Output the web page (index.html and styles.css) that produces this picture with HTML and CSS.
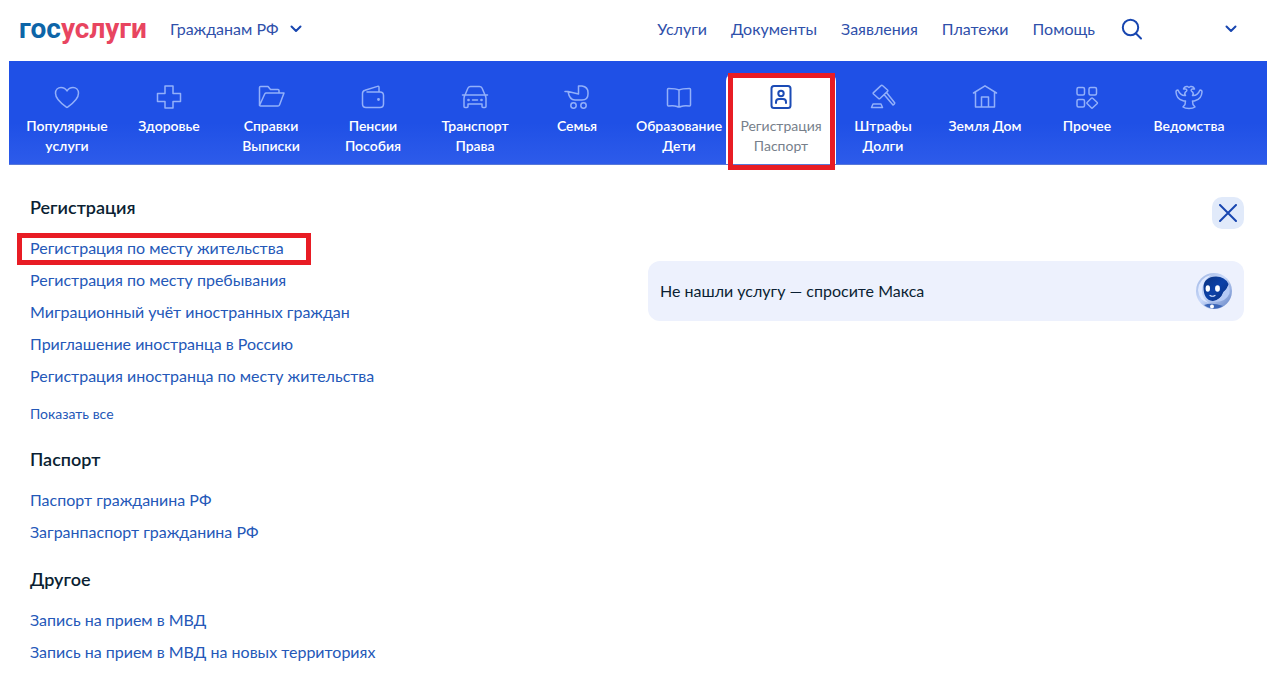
FILE: index.html
```
<!DOCTYPE html>
<html lang="ru">
<head>
<meta charset="utf-8">
<meta name="viewport" content="width=device-width, initial-scale=1">
<title>Госуслуги</title>
<link rel="stylesheet" href="styles.css">
</head>
<body>
<header class="header">
  <a class="logo" href="#"><span class="logo-blue">гос</span><span class="logo-red">услуги</span></a>
  <button class="audience" type="button">Гражданам РФ
    <svg class="chevron" width="12" height="8" viewBox="0 0 12 8"><path d="M1.500 1.500 6 6l4.500-4.500"/></svg>
  </button>
  <nav class="menu" aria-label="Основное меню">
    <a href="#">Услуги</a>
    <a href="#">Документы</a>
    <a href="#">Заявления</a>
    <a href="#">Платежи</a>
    <a href="#">Помощь</a>
  </nav>
  <button class="search" type="button" aria-label="Поиск">
    <svg width="22" height="22" viewBox="0 0 22 22"><circle cx="9.500" cy="9.500" r="7.700"/><path d="m15 15.500 5 5"/></svg>
  </button>
  <button class="profile" type="button" aria-label="Профиль">
    <svg class="chevron" width="12" height="8" viewBox="0 0 12 8"><path d="M1.500 1.500 6 6l4.500-4.500"/></svg>
  </button>
</header>

<nav class="tabs" aria-label="Категории">
  <a class="tab" href="#"><svg viewBox="0 0 28 28"><path d="M14 24.500C10.500 22 2.500 17 2.500 10.300 2.500 6.800 5 4.500 8 4.500c2.500 0 4.700 1.200 6 3.500 1.300-2.300 3.500-3.500 6-3.500 3 0 5.500 2.300 5.500 5.800C25.500 17 17.500 22 14 24.500Z"/></svg><span>Популярные услуги</span></a>
  <a class="tab" href="#"><svg viewBox="0 0 28 28"><path d="M10 3h8v7.500h7.500v8H18V25h-8v-6.500H2.500v-8H10Z"/></svg><span>Здоровье</span></a>
  <a class="tab" href="#"><svg viewBox="0 0 28 28"><path d="M2.500 22.500V4.500Q2.500 3.500 3.500 3.500H11l2.500 3H21q1 0 1 1V10M2.500 22.500 7.700 11q.5-1 1.500-1H27l-4.500 12q-.4 1-1.500 1H3.500q-1 0-1-1Z"/></svg><span>Справки Выписки</span></a>
  <a class="tab" href="#"><svg viewBox="0 0 28 28"><path d="M20 9V4.500Q20 3 18.500 3.400L6 7.300Q3.500 8 3.500 10.500V21q0 3.500 3.500 3.500h14q3.500 0 3.500-3.500v-8.500Q24.500 9 21 9H8"/><circle cx="19.500" cy="16.500" r=".7"/></svg><span>Пенсии Пособия</span></a>
  <a class="tab" href="#"><svg viewBox="0 0 28 28"><path d="M1.500 12h25M4 12l3-7q.8-1.500 2.500-1.500h9Q20.200 3.500 21 5l3 7M4 12q-1 1.500-1 3.500v8q0 1 1 1h2q1 0 1-1V21h14v2.500q0 1 1 1h2q1 0 1-1v-8q0-2-1-3.500M11.500 17h5"/><circle cx="7.500" cy="17" r=".6"/><circle cx="20.500" cy="17" r=".6"/></svg><span>Транспорт Права</span></a>
  <a class="tab" href="#"><svg viewBox="0 0 28 28"><path d="M2 8.500h3L15.500 11V3H19Q25 4 25 9.500v1.500Q25 17 19 17H12Q6.500 17 5 8.500"/><circle cx="10.500" cy="22.500" r="2.700"/><circle cx="20.500" cy="22.500" r="2.700"/></svg><span>Семья</span></a>
  <a class="tab" href="#"><svg viewBox="0 0 28 28"><path d="M14 7Q11 5.500 3.500 5.500q-1 0-1 1V22q0 1 1 1 5.500-.7 8.500.5 2 1 4 0 3-1.200 8.500-.5 1 0 1-1V6.500q0-1-1-1Q17 5.500 14 7v17"/></svg><span>Образование Дети</span></a>
  <a class="tab tab-active" href="#" aria-current="page"><svg viewBox="0 0 28 28"><rect x="4.500" y="3" width="19" height="22" rx="2.500"/><circle cx="14" cy="10.500" r="2.700"/><path d="M9 20v-1q0-3 3-3h4q3 0 3 3v1"/></svg><span>Регистрация Паспорт</span></a>
  <a class="tab" href="#"><svg viewBox="0 0 28 28"><path d="m13.500 2.500 5 4.500q.7.700 0 1.400L11 15.500q-.7.700-1.400 0L4.500 11q-.7-.7 0-1.400l7.500-7q.8-.8 1.500-.1ZM15 11.500 24 22q1.300-.5 1.800-2L17.500 9.500M4 21h8l1.500 3.500H2.500Z"/></svg><span>Штрафы Долги</span></a>
  <a class="tab" href="#"><svg viewBox="0 0 28 28"><path d="M2.500 10 14 2.800 25.500 10M4.500 9v15h19V9M10.500 24V14h7v10"/></svg><span>Земля Дом</span></a>
  <a class="tab" href="#"><svg viewBox="0 0 28 28"><rect x="4" y="4.500" width="7.500" height="7.500" rx="1.500"/><rect x="16" y="4.500" width="7.500" height="7.500" rx="1.500"/><rect x="4" y="16.500" width="7.500" height="7.500" rx="1.500"/><path d="m19.700 15.300 4.300 4q.8.700 0 1.500l-4.300 4q-.7.700-1.400 0l-4-4q-.8-.8 0-1.500l4-4q.7-.7 1.400 0Z"/></svg><span>Прочее</span></a>
  <a class="tab" href="#"><svg viewBox="0 0 28 28"><path d="M8.500 6Q9.500 3 12.500 3.500l1.500 1 1.500-1Q18.500 3 19.500 6H17q-2 1.500.5 3 1.500 2 0 3.500 5 .5 7.500-5.500 2 0 2 2-.5 7-6.500 8.500-2 .8-3 .5l.5 3.500 2 2.500q-2 1.500-6 1.500T8 24l2-2.500.5-3.500q-1 .3-3-.5Q1.500 16 1 9q0-2 2-2 2.500 6 7.500 5.500-1.500-1.500 0-3.500Q13 7.500 11 6Z"/></svg><span>Ведомства</span></a>
</nav>

<main class="content">
  <div class="services">
    <section class="group">
      <h2>Регистрация</h2>
      <ul>
        <li><a class="marked" href="#">Регистрация по месту жительства</a></li>
        <li><a href="#">Регистрация по месту пребывания</a></li>
        <li><a href="#">Миграционный учёт иностранных граждан</a></li>
        <li><a href="#">Приглашение иностранца в Россию</a></li>
        <li><a href="#">Регистрация иностранца по месту жительства</a></li>
      </ul>
      <button class="show-all" type="button">Показать все</button>
    </section>
    <section class="group">
      <h2>Паспорт</h2>
      <ul>
        <li><a href="#">Паспорт гражданина РФ</a></li>
        <li><a href="#">Загранпаспорт гражданина РФ</a></li>
      </ul>
    </section>
    <section class="group">
      <h2>Другое</h2>
      <ul>
        <li><a href="#">Запись на прием в МВД</a></li>
        <li><a href="#">Запись на прием в МВД на новых территориях</a></li>
      </ul>
    </section>
  </div>
  <aside class="side">
    <button class="close" type="button" aria-label="Закрыть"><svg width="18" height="18" viewBox="0 0 18 18"><path d="m1 1 16 16M17 1 1 17"/></svg></button>
    <button class="assistant" type="button">
      <span>Не нашли услугу — спросите Макса</span>
      <svg class="robot" width="36" height="36" viewBox="0 0 36 36">
        <defs>
          <linearGradient id="shell" x1="0" y1="0" x2="1" y2="1"><stop offset="0" stop-color="#9db4e2"/><stop offset=".45" stop-color="#c9d9fa"/><stop offset="1" stop-color="#5f80c4"/></linearGradient>
          <linearGradient id="face" x1="0" y1="0" x2="1" y2="1"><stop offset="0" stop-color="#0b327f"/><stop offset=".5" stop-color="#0c41a8"/><stop offset="1" stop-color="#0a2f7c"/></linearGradient>
        </defs>
        <circle cx="18" cy="18" r="18" fill="url(#shell)"/>
        <path d="M2 17Q3 5 15 2 6 9 6 18q0 8 7 12Q3 28 2 17Z" fill="#dfe9ff"/>
        <path d="M7.500 14Q8 4 20 3.500q9 0 12.500 7.500-1 5-5 8-3 9-11 9-9-1-9-14Z" fill="url(#face)"/>
        <path d="M32.500 12q-2 5-5 7-3 8-11 9.500 13 1.500 17-8 1-4-1-8.500Z" fill="#b5caf5"/>
        <ellipse cx="11.800" cy="15.500" rx="2.200" ry="3.300" fill="#fff"/>
        <ellipse cx="21.500" cy="15.500" rx="2.400" ry="3.300" fill="#fff"/>
        <path d="M14 22.500q2.500 1.500 5 0" fill="none" stroke="#dbe8ff" stroke-width="1.200"/>
        <path d="M8 32q8-3 19 1-9 6-19-1Z" fill="#3d67b8"/>
        <circle cx="16" cy="33.500" r="2" fill="#fff"/>
      </svg>
    </button>
  </aside>
</main>
</body>
</html>
```
FILE: styles.css
```
* { box-sizing: border-box; }

body {
  margin: 0 12px 0 9px;
  background: #fff;
  color: #0b1f33;
  font: 16px/24px Lato, "Open Sans", sans-serif;
}

a { color: inherit; text-decoration: none; }

button {
  padding: 0;
  border: 0;
  background: none;
  color: inherit;
  font: inherit;
  cursor: pointer;
}

svg { display: block; fill: none; stroke-linecap: round; stroke-linejoin: round; }

.header {
  display: flex;
  align-items: center;
  height: 61px;
  padding: 0 30px 4px 10px;
  color: #2f50aa;
}

.logo { font: 700 28px/32px Roboto, sans-serif; }
.logo-blue { color: #0d65a8; }
.logo-red { color: #e84560; }

.audience {
  display: flex;
  align-items: center;
  gap: 11px;
  margin-left: 23px;
}

.chevron { stroke: #1846b0; stroke-width: 2; }

.menu { display: flex; gap: 24px; margin-left: auto; }

.search { margin-left: 26px; stroke: #1846b0; stroke-width: 2; }

.profile { margin-left: 82px; }

.tabs {
  display: grid;
  grid-template-columns: repeat(12, minmax(0, 1fr));
  padding: 12px 27px 0 7px;
  border-bottom: 1px solid #5878d8;
  background: linear-gradient(#1f50e6 60%, #2d5bea);
  color: #fff;
}

.tab {
  display: flex;
  flex-direction: column;
  align-items: center;
  height: 91px;
  padding: 10px 8px 0;
  font-size: 14px;
  font-weight: 600;
  line-height: 20px;
  text-align: center;
}

.tab svg {
  width: 28px;
  height: 28px;
  margin-bottom: 5px;
  stroke: #93b0fa;
  stroke-width: 1.5;
}

.tab span { display: block; width: min-content; }
.tab:nth-child(10) span { white-space: nowrap; }

.tab-active {
  position: relative;
  margin: 0 -4px -1px;
  border-radius: 8px 8px 0 0;
  background: #fff;
  color: #777f8b;
  font-weight: 400;
}

.tab-active svg { stroke: #1b4bb5; stroke-width: 2; }

.tab-active::after,
.marked::after {
  content: "";
  position: absolute;
  border: 5px solid #e81c24;
  pointer-events: none;
}

.tab-active::after { inset: 0 1px -6px 2px; }

.content {
  display: grid;
  grid-template-columns: 1fr 1fr;
  gap: 22px;
  padding: 30px 23px 9px 21px;
}

.group + .group { margin-top: 19px; }

h2 { margin: 0 0 13px; font-size: 18px; font-weight: 600; line-height: 24px; }

ul { margin: 0; padding: 0; list-style: none; }

li { line-height: 32px; color: #2458b8; }

.marked { position: relative; }
.marked::after { inset: -5px -27px -8px -13px; }

.show-all {
  display: block;
  margin: 12px 0 23px;
  color: #2458b8;
  font-size: 14px;
  line-height: 20px;
}

.side { display: flex; flex-direction: column; align-items: flex-end; gap: 32px; }

.close {
  display: grid;
  place-items: center;
  width: 32px;
  height: 32px;
  margin-top: 2px;
  border-radius: 10px;
  background: #e1eafa;
  stroke: #1846b0;
  stroke-width: 2;
}

.assistant {
  display: flex;
  align-items: center;
  justify-content: space-between;
  width: 100%;
  padding: 12px;
  border-radius: 12px;
  background: #edf1fd;
}
```
